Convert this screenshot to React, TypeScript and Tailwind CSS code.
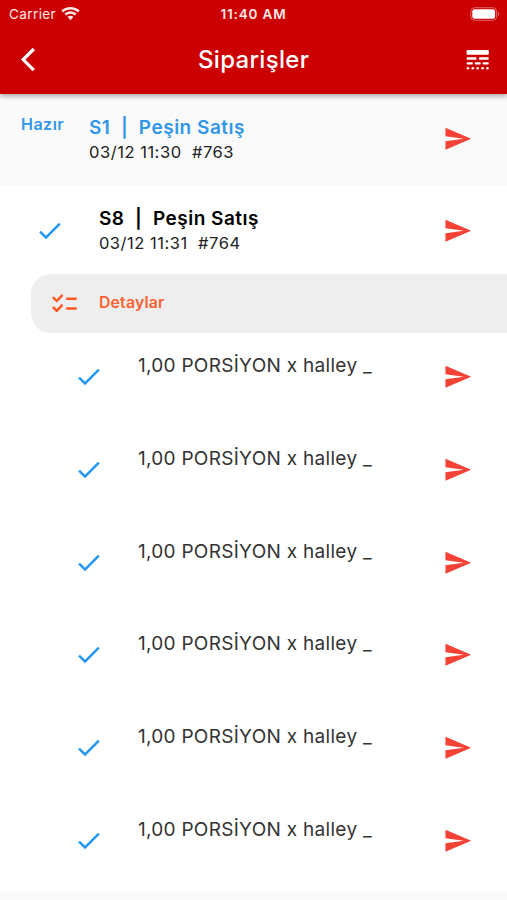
import type { ReactNode } from 'react'
import { MdCheck, MdSend } from 'react-icons/md'

const ITEMS = Array.from({ length: 6 }, (_, i) => ({ id: i, text: '1,00 PORSİYON x halley _' }))

function StatusBar() {
  return (
    <div className="flex h-[27px] items-center text-[#ffe9e9]">
      <div className="flex w-[220.5px] items-center gap-[5px] pl-[9px]">
        <span className="pt-px text-[13.5px] tracking-[0.4px]">Carrier</span>
        <svg width="19" height="14" viewBox="0 0 19 14" fill="currentColor">
          <path d="M9.5 0C5.900 0 2.700 1.300 0.300 3.500l1.700 1.900C4 3.500 6.600 2.400 9.500 2.400s5.500 1.100 7.500 3l1.700-1.900C16.300 1.300 13.100 0 9.500 0z" />
          <path d="M9.500 4.300c-2.300 0-4.400 0.900-6 2.400l1.700 1.900c1.200-1.100 2.700-1.800 4.300-1.800s3.100 0.700 4.300 1.800l1.700-1.900c-1.600-1.500-3.700-2.400-6-2.400z" />
          <path d="M9.500 8.700c-1.100 0-2.100 0.400-2.900 1.200l2.900 3.300 2.900-3.300c-0.800-0.800-1.800-1.200-2.900-1.200z" />
        </svg>
      </div>
      <span className="pt-px text-[13.5px] font-semibold tracking-[0.85px]">11:40 AM</span>
      <div className="flex flex-1 justify-end pr-[7px]">
        <svg width="30" height="14" viewBox="0 0 30 14">
          <rect x="0.800" y="0.700" width="25.800" height="12.600" rx="3.800" fill="none" stroke="#fff" strokeOpacity="0.400" />
          <rect x="2.300" y="2.200" width="22.800" height="9.600" rx="2.400" fill="#fff" />
          <path d="M27.800 4.800v4.400c1.900-0.700 1.900-3.700 0-4.400z" fill="#fff" fillOpacity="0.400" />
        </svg>
      </div>
    </div>
  )
}

function LineStyleIcon() {
  return (
    <svg width="29.4" height="29.4" viewBox="0 0 24 24" fill="#fff">
      <rect x="2.900" y="4" width="18.200" height="4" rx="0.800" />
      <rect x="3" y="10" width="8" height="2" rx="0.600" />
      <rect x="13" y="10" width="8" height="2" rx="0.600" />
      <rect x="3" y="14" width="5" height="2" rx="0.600" />
      <rect x="9.500" y="14" width="5" height="2" rx="0.600" />
      <rect x="16" y="14" width="5" height="2" rx="0.600" />
      {[4, 8, 12, 16, 20].map(cx => (
        <circle key={cx} cx={cx} cy="19" r="1.050" />
      ))}
    </svg>
  )
}

function ChecklistIcon() {
  return (
    <svg
      width="29.4"
      height="29.4"
      viewBox="0 0 24 24"
      fill="none"
      stroke="#ff5722"
      strokeWidth="2"
      strokeLinecap="round"
      strokeLinejoin="round"
    >
      <path d="M14 8h7M14 16h7" />
      <path d="M2.900 7.200l2.600 2.600L9.700 5.400M2.900 15.200l2.600 2.600 4.200-4.400" />
    </svg>
  )
}

function Send() {
  return <MdSend size={29.4} className="shrink-0 text-[#f44336]" />
}

function Order({ title, meta, children }: { title: string; meta: string; children?: ReactNode }) {
  return (
    <div className="flex-1 whitespace-pre">
      <div className="text-[19px] leading-[25px] font-semibold tracking-[0.5px]">{title}</div>
      <div className="text-[16.5px] leading-[25px] tracking-[0.53px] text-[#222]">{meta}</div>
      {children}
    </div>
  )
}

export default function App() {
  return (
    <div className="flex h-[900px] w-[507px] flex-col overflow-hidden bg-[#fafafa] font-['Inter','Liberation_Sans',sans-serif]">
      <header className="z-10 h-[94px] shrink-0 bg-[#cc0000] shadow-[0_2px_5px_rgba(0,0,0,0.35)]">
        <StatusBar />
        <div className="flex h-[66px] items-center text-white">
          <div className="w-[198px] pl-[20px]">
            <svg width="16" height="26" viewBox="0 0 16 26" fill="none" stroke="#fff" strokeWidth="3.200">
              <path d="M13.800 2L3.200 12.600l10.600 10.600" />
            </svg>
          </div>
          <h1 className="text-[24px] font-medium tracking-[0.3px]">Siparişler</h1>
          <div className="flex flex-1 justify-end pr-[14.6px]">
            <LineStyleIcon />
          </div>
        </div>
      </header>

      <div className="flex h-[92px] shrink-0 items-start pr-[35px]">
        <div className="w-[89px] pt-[19px] pl-[21px] text-[16px] leading-[22px] font-semibold tracking-[0.5px] text-[#2f96ea]">
          Hazır
        </div>
        <div className="flex-1 pt-[21px] text-[#2f96ea]">
          <Order title="S1  |  Peşin Satış" meta="03/12 11:30  #763" />
        </div>
        <div className="pt-[30px]">
          <Send />
        </div>
      </div>

      <main className="h-[706px] shrink-0 bg-white">
        <div className="flex h-[88px] items-start pr-[35px]">
          <MdCheck size={29.4} className="mt-[30px] ml-[35px] shrink-0 text-[#2196f3]" />
          <div className="ml-[34.5px] flex-1 pt-[20px] text-black">
            <Order title="S8  |  Peşin Satış" meta="03/12 11:31  #764" />
          </div>
          <div className="pt-[29.5px]">
            <Send />
          </div>
        </div>

        <div className="ml-[30.5px] flex h-[58.5px] items-center rounded-l-[20px] bg-[#eeeeee] pl-[19.5px]">
          <ChecklistIcon />
          <span className="ml-[19.5px] text-[15.8px] font-semibold tracking-[0.2px] text-[#fc6032]">Detaylar</span>
        </div>

        <div className="pt-[2.5px]">
          {ITEMS.map(item => (
            <div key={item.id} className="flex h-[92.8px] items-start pr-[35px] pl-[74px]">
              <MdCheck size={29.4} className="mt-[27px] shrink-0 text-[#2196f3]" />
              <div className="ml-[34.5px] flex-1 pt-[18px] text-[19px] leading-[26px] tracking-[0.3px] text-[#333]">
                {item.text}
              </div>
              <div className="pt-[27px]">
                <Send />
              </div>
            </div>
          ))}
        </div>
      </main>
    </div>
  )
}
